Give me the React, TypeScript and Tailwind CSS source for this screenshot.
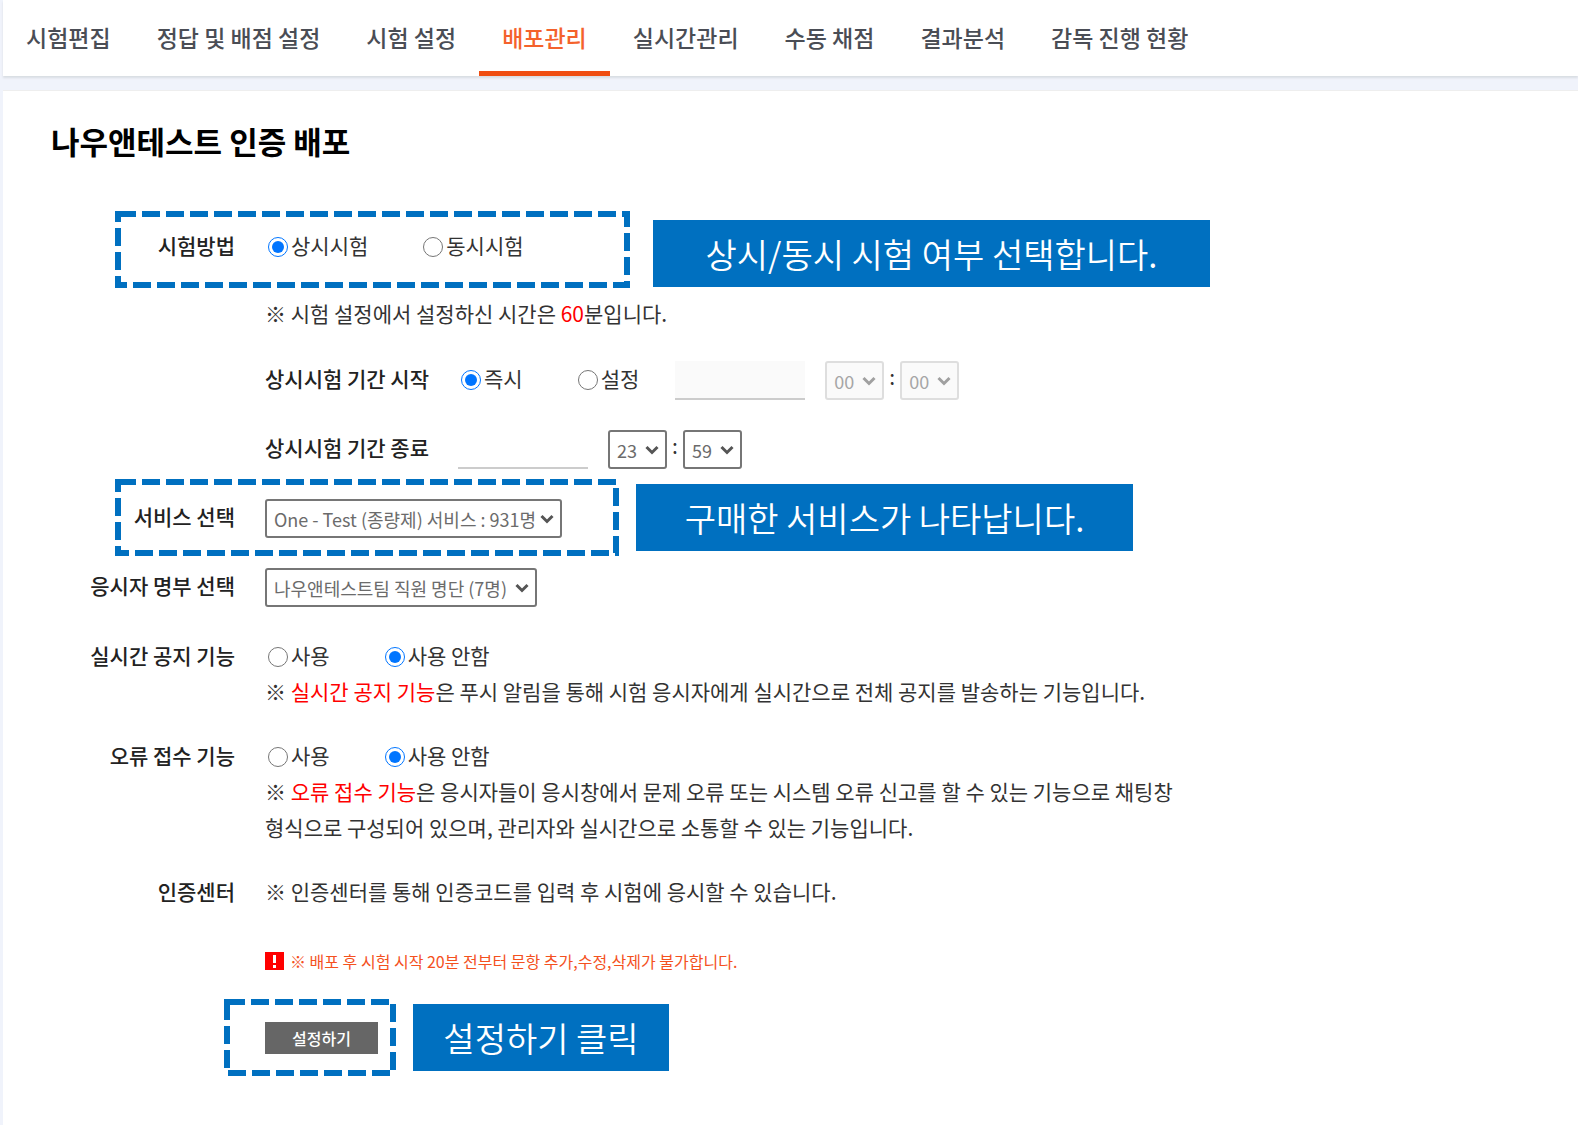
import React, { useState } from "react";

const tabs = [
  "시험편집",
  "정답 및 배점 설정",
  "시험 설정",
  "배포관리",
  "실시간관리",
  "수동 채점",
  "결과분석",
  "감독 진행 현황",
];

interface RadioProps {
  name: string;
  label: string;
  checked: boolean;
  onChange: () => void;
}

function Radio({ name, label, checked, onChange }: RadioProps) {
  return (
    <label className="flex items-center gap-[3px] pl-[3px]">
      <input type="radio" name={name} checked={checked} onChange={onChange} className="mt-1 size-5" />
      {label}
    </label>
  );
}

interface SelectProps {
  id?: string;
  label?: string;
  options: string[];
  disabled?: boolean;
  className?: string;
}

function Select({ id, label, options, disabled, className = "" }: SelectProps) {
  return (
    <div className={"relative mt-1.5 " + className}>
      <select
        id={id}
        aria-label={label}
        disabled={disabled}
        className="block h-[39px] w-full appearance-none rounded-[3px] border-2 border-[#767676] bg-white pr-6 pl-[7px] text-[18px] text-[#6b6b6b] disabled:border-[#dedede] disabled:bg-[#fafafa] disabled:text-[#a6a6a6]"
      >
        {options.map((option) => (
          <option key={option}>{option}</option>
        ))}
      </select>
      <svg
        viewBox="0 0 14 10"
        className={
          "pointer-events-none absolute top-[15px] right-2 h-[10px] w-[14px] " +
          (disabled ? "text-[#a0a0a0]" : "text-[#555555]")
        }
      >
        <path d="M1.5 2 L7 7.5 L12.5 2" fill="none" stroke="currentColor" strokeWidth="3" />
      </svg>
    </div>
  );
}

// Dashed frame drawn around a highlighted part of the form
function Frame({ className }: { className: string }) {
  return (
    <svg className={"pointer-events-none absolute overflow-visible " + className}>
      <rect width="100%" height="100%" fill="none" stroke="#0070c0" strokeWidth="6" strokeDasharray="18 6" />
    </svg>
  );
}

function Callout({ className, children }: { className: string; children: React.ReactNode }) {
  return (
    <div
      className={
        "absolute flex h-[67px] items-center justify-center bg-[#0070c0] text-[34px] font-[350] whitespace-nowrap text-white " +
        className
      }
    >
      {children}
    </div>
  );
}

function RowLabel({ htmlFor, children }: { htmlFor?: string; children: React.ReactNode }) {
  const className = "w-[184px] shrink-0 text-right font-medium text-[#222222]";
  if (htmlFor) {
    return (
      <label htmlFor={htmlFor} className={className}>
        {children}
      </label>
    );
  }
  return <div className={className}>{children}</div>;
}

export default function App() {
  const [activeTab, setActiveTab] = useState("배포관리");
  const [method, setMethod] = useState("always");
  const [start, setStart] = useState("now");
  const [notice, setNotice] = useState("off");
  const [report, setReport] = useState("off");

  return (
    <div className="flex min-h-screen flex-col bg-[#f0f3fb] pl-[3px] font-['Noto_Sans_CJK_KR','Noto_Sans',sans-serif] text-[21px] leading-9 text-[#333333]">
      <nav className="flex h-[76px] bg-white shadow-[0_2px_2px_#d9dde3]">
        {tabs.map((tab) => (
          <a
            key={tab}
            href="#"
            onClick={() => setActiveTab(tab)}
            className={
              "flex items-center border-b-[5px] px-[23px] pt-[3px] text-[23px] font-medium whitespace-nowrap " +
              (tab === activeTab ? "border-[#f04e12] text-[#f4622c]" : "border-transparent text-[#4a4d55]")
            }
          >
            {tab}
          </a>
        ))}
      </nav>

      <main className="mt-[14px] grow border-t border-[#eeeeee] bg-white pl-12">
        <h1 className="mt-8 text-[31px] font-bold text-black">나우앤테스트 인증 배포</h1>

        <form className="mt-[53px]" onSubmit={(e) => e.preventDefault()}>
          {/* Exam method */}
          <div className="relative flex h-[69px] items-center gap-[30px] pb-1">
            <Frame className="top-[2px] left-[67px] h-[71px] w-[509px]" />
            <RowLabel>시험방법</RowLabel>
            <div className="flex gap-[52px]">
              <Radio name="method" label="상시시험" checked={method === "always"} onChange={() => setMethod("always")} />
              <Radio name="method" label="동시시험" checked={method === "same"} onChange={() => setMethod("same")} />
            </div>
            <Callout className="top-2 left-[602px] w-[557px]">상시/동시 시험 여부 선택합니다.</Callout>
          </div>
          <div className="flex h-16 items-center pl-[214px]">
            <p>
              ※ 시험 설정에서 설정하신 시간은 <span className="text-[#ff0000]">60</span>분입니다.
            </p>
          </div>

          {/* Exam period */}
          <div className="flex h-[69px] items-center pb-1 pl-[214px]">
            <div className="w-[193px] font-medium text-[#222222]">상시시험 기간 시작</div>
            <div className="flex gap-[52px]">
              <Radio name="start" label="즉시" checked={start === "now"} onChange={() => setStart("now")} />
              <Radio name="start" label="설정" checked={start === "set"} onChange={() => setStart("set")} />
            </div>
            <input
              type="text"
              aria-label="시작일"
              disabled={start === "now"}
              className="mt-1.5 mr-5 ml-9 h-[39px] w-[130px] border-b-2 border-[#cccccc] disabled:bg-[#fafafa]"
            />
            <Select label="시작 시" options={["00"]} disabled={start === "now"} className="w-[59px]" />
            <span className="w-4 pb-1 text-center">:</span>
            <Select label="시작 분" options={["00"]} disabled={start === "now"} className="w-[59px]" />
          </div>
          <div className="flex h-[69px] items-center pb-1 pl-[214px]">
            <label htmlFor="endDate" className="w-[193px] font-medium text-[#222222]">
              상시시험 기간 종료
            </label>
            <input type="text" id="endDate" className="mt-1.5 mr-5 h-[39px] w-[130px] border-b-2 border-[#cccccc]" />
            <Select label="종료 시" options={["23"]} className="w-[59px]" />
            <span className="w-4 pb-1 text-center">:</span>
            <Select label="종료 분" options={["59"]} className="w-[59px]" />
          </div>

          {/* Service and roster */}
          <div className="relative flex h-[69px] items-center gap-[30px] pb-1">
            <Frame className="-top-px left-[67px] h-[71px] w-[498px]" />
            <RowLabel htmlFor="service">서비스 선택</RowLabel>
            <Select id="service" options={["One - Test (종량제) 서비스 : 931명"]} className="w-[297px]" />
            <Callout className="top-px left-[585px] w-[497px]">구매한 서비스가 나타납니다.</Callout>
          </div>
          <div className="flex h-[69px] items-center gap-[30px] pb-1">
            <RowLabel htmlFor="roster">응시자 명부 선택</RowLabel>
            <Select id="roster" options={["나우앤테스트팀 직원 명단 (7명)"]} className="w-[272px]" />
          </div>

          {/* Live notice */}
          <div className="mt-4 flex gap-[30px]">
            <RowLabel>실시간 공지 기능</RowLabel>
            <div>
              <div className="flex gap-[52px]">
                <Radio name="notice" label="사용" checked={notice === "on"} onChange={() => setNotice("on")} />
                <Radio name="notice" label="사용 안함" checked={notice === "off"} onChange={() => setNotice("off")} />
              </div>
              <p>
                ※ <span className="text-[#ff0000]">실시간 공지 기능</span>은 푸시 알림을 통해 시험 응시자에게 실시간으로
                전체 공지를 발송하는 기능입니다.
              </p>
            </div>
          </div>

          {/* Error report */}
          <div className="mt-7 flex gap-[30px]">
            <RowLabel>오류 접수 기능</RowLabel>
            <div>
              <div className="flex gap-[52px]">
                <Radio name="report" label="사용" checked={report === "on"} onChange={() => setReport("on")} />
                <Radio name="report" label="사용 안함" checked={report === "off"} onChange={() => setReport("off")} />
              </div>
              <p>
                ※ <span className="text-[#ff0000]">오류 접수 기능</span>은 응시자들이 응시창에서 문제 오류 또는 시스템 오류
                신고를 할 수 있는 기능으로 채팅창
                <br />
                형식으로 구성되어 있으며, 관리자와 실시간으로 소통할 수 있는 기능입니다.
              </p>
            </div>
          </div>

          <div className="mt-7 flex gap-[30px]">
            <RowLabel>인증센터</RowLabel>
            <p>※ 인증센터를 통해 인증코드를 입력 후 시험에 응시할 수 있습니다.</p>
          </div>

          <div className="mt-[34px] flex items-center gap-[6px] pl-[214px] text-[16px] text-[#f4511e]">
            <svg viewBox="0 0 19 18" className="h-[18px] w-[19px]">
              <rect width="19" height="18" fill="#ff0000" />
              <rect x="8" y="3" width="3" height="8" fill="#ffffff" />
              <rect x="8" y="13" width="3" height="3" fill="#ffffff" />
            </svg>
            <p>※ 배포 후 시험 시작 20분 전부터 문항 추가,수정,삭제가 불가합니다.</p>
          </div>

          <div className="relative mt-5 flex h-[77px] items-center pl-[214px]">
            <Frame className="top-[3px] left-[176px] h-[71px] w-[166px]" />
            <button type="submit" className="h-8 w-[113px] bg-[#666666] text-[16px] leading-8 font-medium text-white">
              설정하기
            </button>
            <Callout className="top-[5px] left-[362px] w-64">설정하기 클릭</Callout>
          </div>
        </form>
      </main>
    </div>
  );
}
